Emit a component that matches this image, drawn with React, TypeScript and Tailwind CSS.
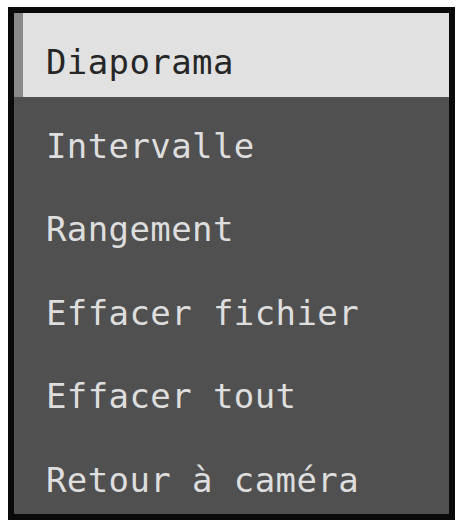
import React from "react";

const items = [
  "Diaporama",
  "Intervalle",
  "Rangement",
  "Effacer fichier",
  "Effacer tout",
  "Retour à caméra",
];

export default function App() {
  const selected = 0;

  return (
    <div className="w-[459px] h-[523px] bg-white pl-[8px] pt-[7px]">
      <div className="w-[447px] h-[513px] border-[6px] border-[#0a0a0a] bg-[#505050] grid grid-rows-6">
        {items.map((label, i) => (
          <div
            key={label}
            className={
              i === selected
                ? "flex bg-[#e1e1e1] border-l-[9px] border-[#8a8a8a]"
                : "flex"
            }
          >
            <span
              className={
                i === selected
                  ? "pl-[23px] pt-[29px] text-[34px] leading-[40px] tracking-[0.4px] text-[#262626] whitespace-pre"
                  : "pl-[32px] pt-[29px] text-[34px] leading-[40px] tracking-[0.4px] text-[#dedede] whitespace-pre"
              }
              style={{ fontFamily: '"DejaVu Sans Mono", monospace' }}
            >
              {label}
            </span>
          </div>
        ))}
      </div>
    </div>
  );
}
